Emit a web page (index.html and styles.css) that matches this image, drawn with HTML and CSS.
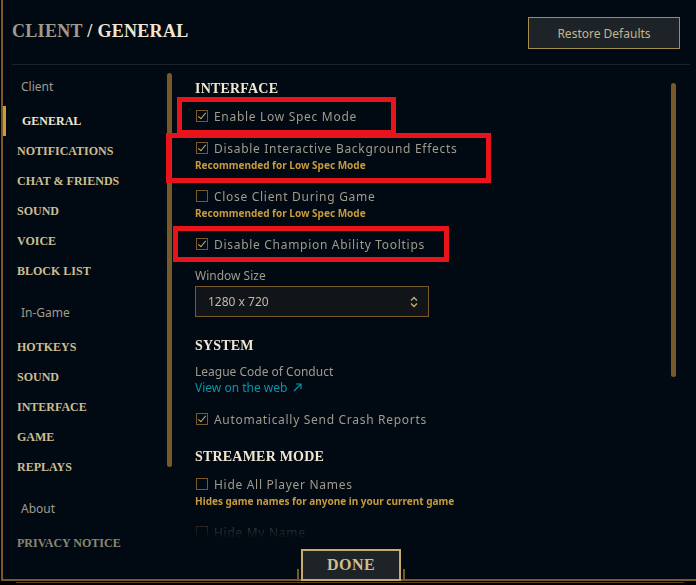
FILE: index.html
```html
<!DOCTYPE html>
<html lang="en">
<head>
    <meta charset="UTF-8" />
    <title>Settings - Client / General</title>
    <link rel="stylesheet" href="styles.css">
</head>
<body>
    <div class="window">
        <header class="top">
            <h1 class="title"><span class="crumb">CLIENT</span> / GENERAL</h1>
            <button class="restore">Restore Defaults</button>
        </header>

        <div class="main">
            <nav class="nav">
                <div class="group first">Client</div>
                <a class="item active">GENERAL</a>
                <a class="item">NOTIFICATIONS</a>
                <a class="item">CHAT &amp; FRIENDS</a>
                <a class="item">SOUND</a>
                <a class="item">VOICE</a>
                <a class="item">BLOCK LIST</a>
                <div class="group">In-Game</div>
                <a class="item">HOTKEYS</a>
                <a class="item">SOUND</a>
                <a class="item">INTERFACE</a>
                <a class="item">GAME</a>
                <a class="item">REPLAYS</a>
                <div class="group">About</div>
                <a class="item dim">PRIVACY NOTICE</a>
            </nav>
            <div class="scroll nav-scroll"></div>

            <section class="content">
                <h2 class="heading">INTERFACE</h2>
                <div class="option">
                    <label class="check"><span class="box on"></span>Enable Low Spec Mode</label>
                </div>
                <div class="option">
                    <label class="check"><span class="box on"></span>Disable Interactive Background Effects</label>
                    <p class="hint">Recommended for Low Spec Mode</p>
                </div>
                <div class="option">
                    <label class="check"><span class="box"></span>Close Client During Game</label>
                    <p class="hint">Recommended for Low Spec Mode</p>
                </div>
                <div class="option">
                    <label class="check"><span class="box on"></span>Disable Champion Ability Tooltips</label>
                </div>

                <div class="field-label">Window Size</div>
                <div class="select">
                    <span>1280 x 720</span>
                    <svg class="updown" width="8" height="12" viewBox="0 0 8 12">
                        <path d="M1 4.5 L4 1.5 L7 4.5 M1 7.5 L4 10.5 L7 7.5" fill="none" stroke="#c8aa6e" stroke-width="1.4"/>
                    </svg>
                </div>

                <h2 class="heading system">SYSTEM</h2>
                <div class="plain">League Code of Conduct</div>
                <a class="web">View on the web
                    <svg width="9" height="9" viewBox="0 0 9 9">
                        <path d="M1 8 L8 1 M3 1 H8 V6" fill="none" stroke="#0596aa" stroke-width="1.2"/>
                    </svg>
                </a>
                <div class="option crash">
                    <label class="check"><span class="box on"></span>Automatically Send Crash Reports</label>
                </div>

                <h2 class="heading streamer">STREAMER MODE</h2>
                <div class="option">
                    <label class="check"><span class="box"></span>Hide All Player Names</label>
                    <p class="hint">Hides game names for anyone in your current game</p>
                </div>
                <div class="option">
                    <label class="check"><span class="box"></span>Hide My Name</label>
                </div>
            </section>
            <div class="scroll content-scroll"></div>
        </div>

        <!-- annotation boxes -->
        <div class="mark mark-1"></div>
        <div class="mark mark-2"></div>
        <div class="mark mark-3"></div>

        <button class="done">DONE</button>
    </div>
    <div class="underline"></div>
</body>
</html>
```

FILE: styles.css
```css
* {
    box-sizing: border-box;
}
html, body {
    margin: 0;
    background: #000;
}
body {
    width: 696px;
    height: 585px;
    overflow: hidden;
    font-family: 'Noto Sans', sans-serif;
    color: #a09b8c;
}
.window {
    position: relative;
    margin-left: 1px;
    height: 581px;
    background: #010a13;
    border-left: 2px solid #785a28;
    border-bottom: 2px solid #785a28;
    display: flex;
    flex-direction: column;
}
.underline {
    margin: 1px 12px 0 16px;
    height: 1px;
    background: #5b4520;
}

/* header */
.top {
    display: flex;
    justify-content: space-between;
    align-items: flex-start;
    height: 65px;
    margin: 0 6px 0 9px;
    padding-top: 17px;
    border-bottom: 1px solid #1e2328;
}
.title {
    margin: 0;
    font-family: 'Liberation Serif', serif;
    font-weight: bold;
    font-size: 18px;
    line-height: 28px;
    letter-spacing: 0.3px;
    color: #f0e6d2;
}
.crumb {
    color: #a09b8c;
}
.restore {
    width: 152px;
    height: 32px;
    margin-right: 10px;
    background: #1e2328;
    border: 1px solid #a98a4f;
    color: #c4b68c;
    font-family: 'Noto Sans', sans-serif;
    font-size: 12px;
    padding: 0;
}

/* body */
.main {
    flex: 1;
    display: flex;
    min-height: 0;
}
.nav {
    width: 164px;
    padding-top: 7px;
    display: flex;
    flex-direction: column;
}
.group {
    height: 30px;
    line-height: 30px;
    padding-left: 18px;
    font-size: 12px;
    color: #a09b8c;
    margin: 12px 0 4px;
}
.group.first {
    margin-top: 0;
}
.item {
    height: 30px;
    line-height: 30px;
    padding-left: 14px;
    font-family: 'Liberation Serif', serif;
    font-weight: bold;
    font-size: 12px;
    color: #cdbe91;
}
.item.active {
    color: #f0e6d2;
    padding-left: 16px;
    border-left: 3px solid #c89b3c;
}
.item.dim {
    color: #8c8672;
}

.scroll {
    width: 5px;
    border-radius: 3px;
    background: #785a28;
}
.nav-scroll {
    margin-top: 8px;
    height: 394px;
}
.content-scroll {
    margin: 18px 20px 0 0;
    height: 294px;
}

/* settings list fades out where it scrolls under the footer */
.content {
    flex: 1;
    height: 472px;
    overflow: hidden;
    margin-left: 23px;
    padding-top: 14px;
    -webkit-mask-image: linear-gradient(to bottom, #000 438px, transparent 474px);
    mask-image: linear-gradient(to bottom, #000 438px, transparent 474px);
}
.heading {
    margin: 0 0 7px;
    font-family: 'Liberation Serif', serif;
    font-weight: bold;
    font-size: 14px;
    line-height: 20px;
    letter-spacing: 0.2px;
    color: #f0e6d2;
}
.heading.system {
    margin-top: 19px;
    margin-bottom: 8px;
}
.heading.streamer {
    margin-top: 18px;
}
.option {
    margin-bottom: 12px;
}
.check {
    display: flex;
    align-items: center;
    height: 20px;
    font-size: 12px;
    letter-spacing: 0.7px;
    color: #a09b8c;
}
.box {
    width: 12px;
    height: 12px;
    margin: 0 6px 0 1px;
    border: 1px solid #785a28;
    position: relative;
}
.box.on::after {
    content: "";
    position: absolute;
    left: 3px;
    top: 0;
    width: 3px;
    height: 7px;
    border-right: 1.5px solid #c8aa6e;
    border-bottom: 1.5px solid #c8aa6e;
    transform: rotate(40deg);
}
.hint {
    margin: 0;
    padding-bottom: 2px;
    font-size: 10px;
    font-weight: bold;
    line-height: 14px;
    color: #c89b3c;
}

.field-label {
    margin-top: 14px;
    font-size: 12px;
    line-height: 16px;
}
.select {
    width: 234px;
    height: 31px;
    margin-top: 2px;
    padding: 0 10px 0 12px;
    display: flex;
    align-items: center;
    justify-content: space-between;
    background: #111519;
    border: 1px solid #785a28;
    font-size: 12px;
    color: #c3bba6;
}
.plain {
    font-size: 12px;
    line-height: 16px;
}
.web {
    display: block;
    font-size: 12px;
    line-height: 16px;
    color: #0596aa;
}
.web svg {
    margin-left: 2px;
}
.option.crash {
    margin-top: 13px;
    margin-bottom: 0;
}

/* red annotation boxes */
.mark {
    position: absolute;
    border: 5px solid #e8141c;
}
.mark-1 {
    left: 174px;
    top: 97px;
    width: 219px;
    height: 38px;
}
.mark-2 {
    left: 163px;
    top: 133px;
    width: 325px;
    height: 50px;
}
.mark-3 {
    left: 170px;
    top: 226px;
    width: 276px;
    height: 36px;
}

/* footer button over the frame edge */
.done {
    position: absolute;
    left: 298px;
    top: 549px;
    width: 100px;
    height: 32px;
    padding: 0;
    background: #1e2328;
    border: 2px solid #c8aa6e;
    font-family: 'Liberation Serif', serif;
    font-weight: bold;
    font-size: 16px;
    letter-spacing: 0.5px;
    color: #cdbe91;
}
.done::before,
.done::after {
    content: "";
    position: absolute;
    bottom: -1px;
    width: 2px;
    height: 11px;
    background: #785a28;
}
.done::before {
    left: -6px;
}
.done::after {
    right: -6px;
}
```
